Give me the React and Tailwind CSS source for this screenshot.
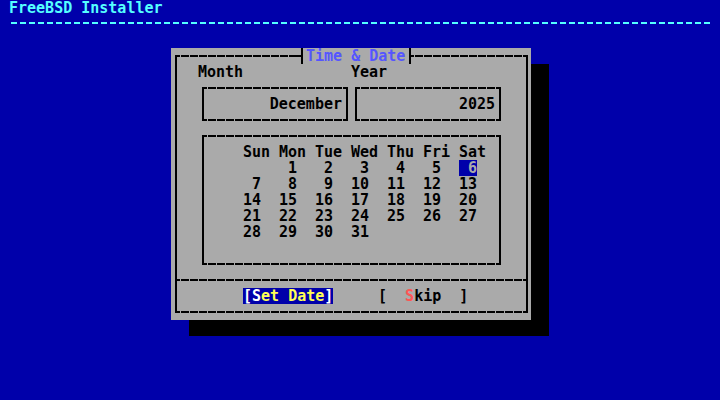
import React from "react";

const DASH =
  "bg-[repeating-linear-gradient(90deg,transparent_0_1px,#000_1px_9px)] bg-fixed";

function Box({ className = "", children }) {
  return (
    <div className={"flex flex-col border-x-2 border-black " + className}>
      <div className={"h-[2px] " + DASH} />
      <div className="flex flex-1 flex-col">{children}</div>
      <div className={"h-[2px] " + DASH} />
    </div>
  );
}

const HEAD = ["Sun", "Mon", "Tue", "Wed", "Thu", "Fri", "Sat"];
const WEEKS = [
  [null, 1, 2, 3, 4, 5, 6],
  [7, 8, 9, 10, 11, 12, 13],
  [14, 15, 16, 17, 18, 19, 20],
  [21, 22, 23, 24, 25, 26, 27],
  [28, 29, 30, 31, null, null, null],
];

export default function App() {
  return (
    <div className="h-[400px] w-[720px] overflow-hidden bg-[#0000aa] font-['DejaVu_Sans_Mono',monospace] text-[15px] font-bold leading-4">
      <div className="h-4 pl-[9px] text-[#55ffff]">FreeBSD Installer</div>
      <div className="h-4 pt-[6px]">
        <div className="ml-[9px] h-[2px] w-[702px] bg-[repeating-linear-gradient(90deg,transparent_0_2px,#55ffff_2px_8px,transparent_8px_9px)] bg-fixed" />
      </div>

      <div className="mt-4 ml-[171px] h-[272px] w-[360px] bg-[#aaaaaa] pt-[7px] pl-[4px] pr-[3px] shadow-[18px_16px_0_0_#000]">
        <div className="flex h-[258px] flex-col border-x-2 border-black text-black">
          {/* top border with title */}
          <div className="flex h-[2px] items-start">
            <div className={"h-[2px] w-[120px] " + DASH} />
            <div className="-mt-[7px] flex h-4">
              <div className="flex w-[9px]">
                <div className="mt-[7px] h-[2px] w-[4px] bg-black" />
                <div className="h-4 w-[2px] bg-black" />
              </div>
              <span className="w-[99px] whitespace-pre text-[#5555ff]">Time &amp; Date</span>
              <div className="flex w-[9px]">
                <div className="w-[4px]" />
                <div className="h-4 w-[2px] bg-black" />
                <div className="mt-[7px] h-[2px] w-[3px] bg-black" />
              </div>
            </div>
            <div className={"h-[2px] flex-1 " + DASH} />
          </div>

          <div className="h-[7px]" />

          {/* labels */}
          <div className="flex h-4">
            <span className="ml-[21px] w-[153px]">Month</span>
            <span>Year</span>
          </div>

          {/* month / year boxes */}
          <div className="flex h-[48px] pt-[7px]">
            <Box className="ml-[25px] h-[34px] w-[146px]">
              <div className="h-[23px] pt-[7px] pr-[4px] text-right">December</div>
            </Box>
            <Box className="ml-[7px] h-[34px] w-[146px]">
              <div className="h-[23px] pt-[7px] pr-[4px] text-right">2025</div>
            </Box>
          </div>

          {/* calendar */}
          <div className="h-[144px] pt-[7px]">
            <Box className="ml-[25px] h-[130px] w-[299px]">
              <div className="pt-[7px]">
                <div className="flex h-4 pl-[39px]">
                  {HEAD.map((h) => (
                    <span key={h} className="w-[36px]">
                      {h}
                    </span>
                  ))}
                </div>
                {WEEKS.map((w, i) => (
                  <div key={i} className="flex h-4 pl-[39px]">
                    {w.map((d, j) => (
                      <div key={j} className="h-4 w-[36px]">
                        {d === 6 ? (
                          <span className="inline-block h-4 w-[18px] bg-[#0000aa] text-right align-top text-[#aaaaaa]">
                            6
                          </span>
                        ) : (
                          <span className="inline-block h-4 w-[18px] text-right align-top">
                            {d ?? ""}
                          </span>
                        )}
                      </div>
                    ))}
                  </div>
                ))}
              </div>
            </Box>
          </div>

          {/* separator */}
          <div className="h-4 pt-[7px]">
            <div className={"h-[2px] " + DASH} />
          </div>

          {/* buttons */}
          <div className="flex h-4 whitespace-pre">
            <span className="ml-[66px] w-[90px] bg-[#0000aa]">
              <span className="text-white">[S</span>
              <span className="text-[#ffff55]">et Date</span>
              <span className="text-white">]</span>
            </span>
            <span className="ml-[45px] w-[90px]">
              <span>{"[  "}</span>
              <span className="text-[#ff5555]">S</span>
              <span>{"kip  ]"}</span>
            </span>
          </div>

          <div className="h-[7px]" />
          <div className={"h-[2px] " + DASH} />
        </div>
      </div>
    </div>
  );
}
